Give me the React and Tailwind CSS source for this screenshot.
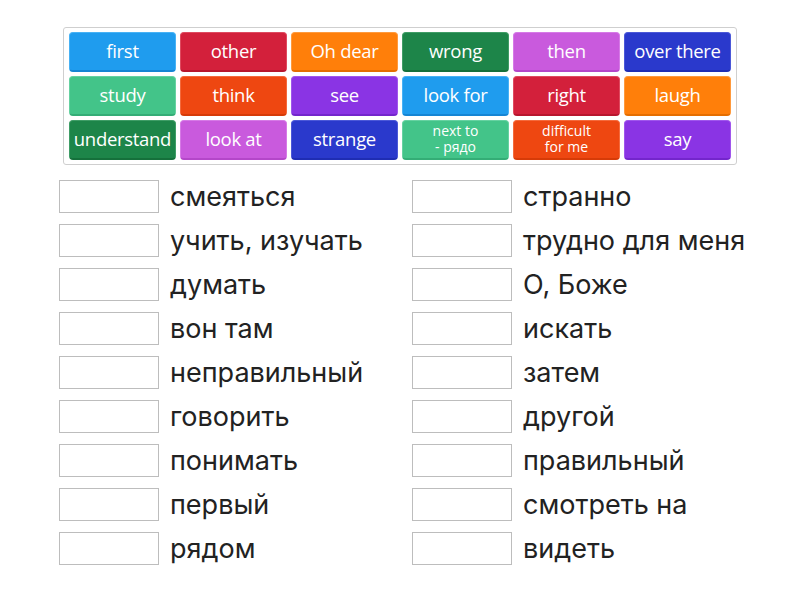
const tiles = [
    { text: 'first', c: 'bg-[#1f9cee] border-[#47b2f5] border-b-[#1585d4]' },
    { text: 'other', c: 'bg-[#d3203b] border-[#df4a5f] border-b-[#b8162e]' },
    { text: 'Oh dear', c: 'bg-[#ff7f0a] border-[#ff9a3d] border-b-[#e56e00]' },
    { text: 'wrong', c: 'bg-[#1d8549] border-[#3f9d66] border-b-[#15703b]' },
    { text: 'then', c: 'bg-[#c95add] border-[#d67ae6] border-b-[#b447c9]' },
    { text: 'over there', c: 'bg-[#2a39cc] border-[#4b58d8] border-b-[#1f2db3]' },
    { text: 'study', c: 'bg-[#43c489] border-[#66d2a1] border-b-[#34ad76]' },
    { text: 'think', c: 'bg-[#ee4711] border-[#f46a3c] border-b-[#d63b08]' },
    { text: 'see', c: 'bg-[#8a34e4] border-[#a056ec] border-b-[#7426cc]' },
    { text: 'look for', c: 'bg-[#1f9cee] border-[#47b2f5] border-b-[#1585d4]' },
    { text: 'right', c: 'bg-[#d3203b] border-[#df4a5f] border-b-[#b8162e]' },
    { text: 'laugh', c: 'bg-[#ff7f0a] border-[#ff9a3d] border-b-[#e56e00]' },
    { text: 'understand', c: 'bg-[#1d8549] border-[#3f9d66] border-b-[#15703b]' },
    { text: 'look at', c: 'bg-[#c95add] border-[#d67ae6] border-b-[#b447c9]' },
    { text: 'strange', c: 'bg-[#2a39cc] border-[#4b58d8] border-b-[#1f2db3]' },
    { text: ['next to', '- рядо'], c: 'bg-[#43c489] border-[#66d2a1] border-b-[#34ad76]' },
    { text: ['difficult', 'for me'], c: 'bg-[#ee4711] border-[#f46a3c] border-b-[#d63b08]' },
    { text: 'say', c: 'bg-[#8a34e4] border-[#a056ec] border-b-[#7426cc]' },
];

const left = [
    'смеяться',
    'учить, изучать',
    'думать',
    'вон там',
    'неправильный',
    'говорить',
    'понимать',
    'первый',
    'рядом',
];

const right = [
    'странно',
    'трудно для меня',
    'О, Боже',
    'искать',
    'затем',
    'другой',
    'правильный',
    'смотреть на',
    'видеть',
];

function Tile({ tile }) {
    const two = Array.isArray(tile.text);
    return (
        <div
            className={
                'flex h-10 items-center justify-center rounded-[4px] border border-b-2 pb-[2px] text-center font-medium text-white ' +
                tile.c
            }
        >
            {two ? (
                <span className="text-[14px] leading-[16px]">
                    {tile.text[0]}
                    <br />
                    {tile.text[1]}
                </span>
            ) : (
                <span className="whitespace-nowrap text-[18.5px] leading-6 tracking-[-0.3px]">
                    {tile.text}
                </span>
            )}
        </div>
    );
}

function Row({ word }) {
    return (
        <div className="flex h-[33px] items-center">
            <div className="h-[33px] w-[100px] shrink-0 border border-[#bdbdbd] bg-white" />
            <span className="ml-[11px] text-[27px] leading-none text-[#222]">{word}</span>
        </div>
    );
}

export default function App() {
    return (
        <div className="h-[600px] w-[800px] bg-white pt-[27px] font-['Inter',sans-serif]">
            <div className="mx-auto w-[674px] rounded-[3px] border border-[#cfcfcf] px-[5px] py-1 font-['Open_Sans',sans-serif]">
                <div className="grid grid-cols-6 gap-1">
                    {tiles.map((t, i) => (
                        <Tile key={i} tile={t} />
                    ))}
                </div>
            </div>

            <div className="ml-[59px] mt-[15px] grid grid-cols-[353px_auto]">
                <div className="flex flex-col gap-[11px]">
                    {left.map((w) => (
                        <Row key={w} word={w} />
                    ))}
                </div>
                <div className="flex flex-col gap-[11px]">
                    {right.map((w) => (
                        <Row key={w} word={w} />
                    ))}
                </div>
            </div>
        </div>
    );
}
